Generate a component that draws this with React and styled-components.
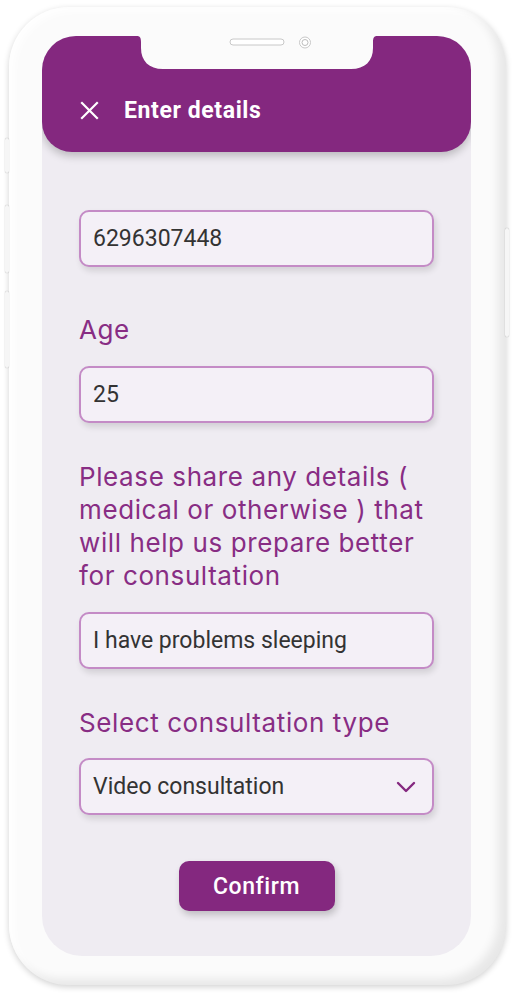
import React from 'react';
import styled, { createGlobalStyle } from 'styled-components';

const purple = '#84287f';

const GlobalStyle = createGlobalStyle`
    html, body {
        margin: 0;
        padding: 0;
        background: #fff;
        font-family: Roboto, "Liberation Sans", sans-serif;
    }
`;

const Stage = styled.div`
    width: 512px;
    height: 996px;
    padding: 7px 0 0 9px;
    box-sizing: border-box;
`;

const Phone = styled.div`
    position: relative;
    width: 497px;
    height: 978px;
    box-sizing: border-box;
    padding: 29px 35px 29px 33px;
    border-radius: 60px;
    background: #fbfbfb;
    box-shadow:
        inset -8px -6px 10px rgba(0, 0, 0, 0.08),
        inset 5px 4px 8px rgba(255, 255, 255, 0.9),
        0 2px 6px rgba(0, 0, 0, 0.18);
`;

const SideButton = styled.div`
    position: absolute;
    top: ${p => p.top}px;
    height: ${p => p.h}px;
    ${p => (p.right ? 'right: -3px;' : 'left: -4px;')}
    width: 4px;
    border-radius: 2px;
    background: #f6f6f6;
    box-shadow: 0 0 1px rgba(0, 0, 0, 0.35);
`;

const Screen = styled.div`
    position: relative;
    height: 100%;
    border-radius: 34px 34px 40px 40px;
    background: #efecf2;
    overflow: hidden;
    display: flex;
    flex-direction: column;
`;

const Notch = styled.svg`
    position: absolute;
    top: 0;
    left: 50%;
    margin-left: -120px;
    width: 240px;
    height: 34px;
    z-index: 2;
`;

const Header = styled.header`
    height: 116px;
    flex-shrink: 0;
    box-sizing: border-box;
    padding: 32px 0 0 38px;
    display: flex;
    align-items: center;
    gap: 25px;
    background: ${purple};
    border-radius: 0 0 30px 30px;
    box-shadow: 0 4px 8px rgba(0, 0, 0, 0.22);
    color: #fff;
`;

const Title = styled.h1`
    margin: 0;
    font-family: Roboto, "Liberation Sans", sans-serif;
    font-size: 23px;
    font-weight: 700;
    letter-spacing: 0.6px;
`;

const Form = styled.div`
    display: flex;
    flex-direction: column;
    padding: 58px 37px 0;
`;

const Label = styled.p`
    margin: ${p => p.top}px 0 ${p => p.bottom || 20}px;
    font-family: Inter, "Open Sans", sans-serif;
    font-size: 26px;
    line-height: 33px;
    font-weight: 400;
    letter-spacing: 0.6px;
    color: #882d84;
`;

const Field = styled.div`
    height: 57px;
    box-sizing: border-box;
    display: flex;
    align-items: center;
    justify-content: space-between;
    padding: 0 16px 0 12px;
    border: 2px solid #c48bc6;
    border-radius: 10px;
    background: #f4f0f7;
    box-shadow: 2px 4px 6px rgba(0, 0, 0, 0.12);
    font-family: Roboto, "Liberation Sans", sans-serif;
    font-size: 23px;
    color: #333;
`;

const ButtonRow = styled.div`
    display: flex;
    justify-content: center;
    margin-top: 46px;
`;

const ConfirmButton = styled.button`
    width: 156px;
    height: 50px;
    border: none;
    border-radius: 10px;
    background: ${purple};
    color: #fff;
    font-family: Roboto, "Liberation Sans", sans-serif;
    font-size: 23px;
    font-weight: 500;
    letter-spacing: 0.6px;
    box-shadow: 2px 4px 7px rgba(0, 0, 0, 0.2);
`;

const CloseIcon = () => (
    <svg width="19" height="19" viewBox="0 0 19 19" fill="none" stroke="#fff" strokeWidth="2.2" strokeLinecap="square">
        <path d="M2 2 L17 17 M17 2 L2 17" />
    </svg>
);

const Chevron = () => (
    <svg width="20" height="12" viewBox="0 0 20 12" fill="none" stroke={purple} strokeWidth="2.4" strokeLinecap="round" strokeLinejoin="round">
        <path d="M2 2 L10 10 L18 2" />
    </svg>
);

export default function App() {
    return (
        <>
            <GlobalStyle />
            <Stage>
                <Phone>
                    <SideButton top={131} h={35} />
                    <SideButton top={198} h={68} />
                    <SideButton top={284} h={77} />
                    <SideButton right top={221} h={109} />
                    <Screen>
                        <Notch viewBox="0 0 240 34">
                            <path d="M0 0 C3 0 4 2 4 6 L4 12 C4 25 12 33 26 33 L214 33 C228 33 236 25 236 12 L236 6 C236 2 237 0 240 0 Z" fill="#fbfbfb" />
                            <rect x="93" y="3" width="54" height="6" rx="3" fill="#fff" stroke="#c8c8c8" strokeWidth="1" />
                            <circle cx="168" cy="6.5" r="5.5" fill="#fff" stroke="#c8c8c8" strokeWidth="1" />
                            <circle cx="168" cy="6.5" r="3" fill="#fff" stroke="#bdbdbd" strokeWidth="1" />
                        </Notch>
                        <Header>
                            <CloseIcon />
                            <Title>Enter details</Title>
                        </Header>
                        <Form>
                            <Field>6296307448</Field>
                            <Label top={46}>Age</Label>
                            <Field>25</Field>
                            <Label top={37}>Please share any details ( medical or otherwise ) that will help us prepare better for consultation</Label>
                            <Field>I have problems sleeping</Field>
                            <Label top={37} bottom={19}>Select consultation type</Label>
                            <Field>
                                Video consultation
                                <Chevron />
                            </Field>
                            <ButtonRow>
                                <ConfirmButton>Confirm</ConfirmButton>
                            </ButtonRow>
                        </Form>
                    </Screen>
                </Phone>
            </Stage>
        </>
    );
}
